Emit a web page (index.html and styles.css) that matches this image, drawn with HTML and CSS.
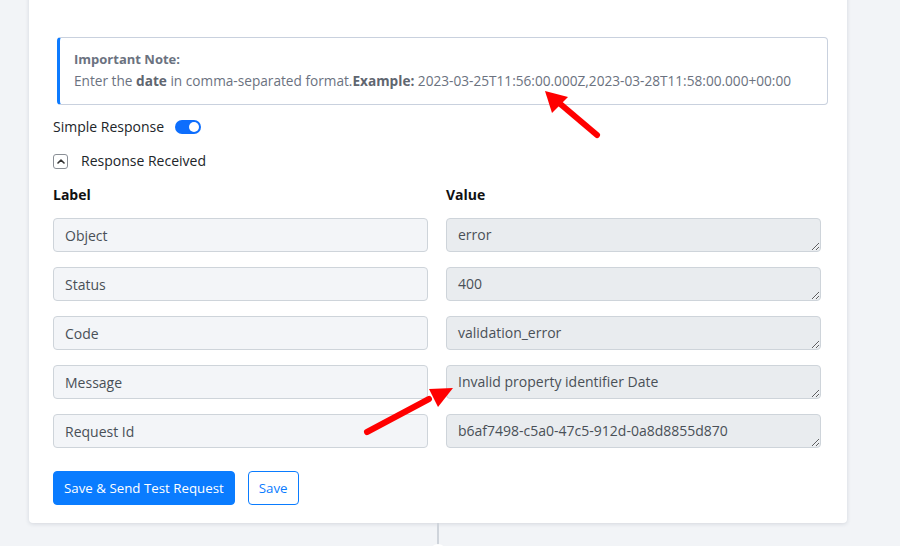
FILE: index.html
```html
<!DOCTYPE html>
<html lang="en">
<head>
    <meta charset="UTF-8">
    <meta name="viewport" content="width=device-width, initial-scale=1.0">
    <title>Response Received</title>
    <link rel="stylesheet" href="styles.css">
</head>
<body>
    <div class="card">
        <div class="note">
            <div class="note-title">Important Note:</div>
            <div class="note-text">Enter the <b>date</b> in comma-separated format.<b>Example:</b> 2023-03-25T11:56:00.000Z,2023-03-28T11:58:00.000+00:00</div>
        </div>

        <div class="switch-row">
            <span>Simple Response</span>
            <span class="toggle"><span class="knob"></span></span>
        </div>

        <div class="collapse-row">
            <span class="chevron">
                <svg width="8" height="6" viewBox="0 0 8 6"><path d="M1 5 L4 2 L7 5" fill="none" stroke="#333" stroke-width="1.6" stroke-linecap="round" stroke-linejoin="round"/></svg>
            </span>
            <span>Response Received</span>
        </div>

        <div class="grid">
            <div class="head">Label</div>
            <div class="head">Value</div>

            <input class="field" type="text" value="Object" readonly>
            <textarea class="value" readonly>error</textarea>

            <input class="field" type="text" value="Status" readonly>
            <textarea class="value" readonly>400</textarea>

            <input class="field" type="text" value="Code" readonly>
            <textarea class="value" readonly>validation_error</textarea>

            <input class="field" type="text" value="Message" readonly>
            <textarea class="value" readonly>Invalid property identifier Date</textarea>

            <input class="field" type="text" value="Request Id" readonly>
            <textarea class="value" readonly>b6af7498-c5a0-47c5-912d-0a8d8855d870</textarea>
        </div>

        <div class="actions">
            <button class="btn btn-primary">Save &amp; Send Test Request</button>
            <button class="btn btn-outline">Save</button>
        </div>

        <!-- markers pointing at the example date and the error message -->
        <svg class="marker marker-top" width="70" height="60" viewBox="0 0 70 60">
            <line x1="59" y1="51" x2="20" y2="18" stroke="#ff0000" stroke-width="6" stroke-linecap="round"/>
            <polygon points="7,7 30,13 14,29" fill="#ff0000"/>
        </svg>
        <svg class="marker marker-mid" width="100" height="60" viewBox="0 0 100 60">
            <line x1="8" y1="52" x2="70" y2="19" stroke="#ff0000" stroke-width="6" stroke-linecap="round"/>
            <polygon points="94,8 70,9 79,27" fill="#ff0000"/>
        </svg>
    </div>

    <div class="connector">
        <span class="stem"></span>
        <span class="dot"></span>
    </div>
</body>
</html>
```

FILE: styles.css
```css
body {
    margin: 0;
    background-color: #f2f4f7;
    font-family: "Open Sans", Arial, sans-serif;
    color: #212529;
    overflow: hidden;
}
.card {
    position: relative;
    background: white;
    margin: -10px 0 0 29px;
    width: 818px;
    box-sizing: border-box;
    padding: 47px 26px 18px 24px;
    border-radius: 4px;
    box-shadow: 0 1px 4px rgba(30, 45, 70, 0.14);
}
.note {
    margin: 0 -7px 0 4px;
    border: 1px solid #c9d1de;
    border-left: 3px solid #0d7bff;
    border-radius: 4px;
    padding: 11px 16px 13px 14px;
    font-size: 13.65px;
    line-height: 21px;
    color: #6b7280;
}
.note-title {
    font-weight: 700;
    font-size: 13px;
}
.note b {
    color: #5f6670;
}
.switch-row {
    display: flex;
    align-items: center;
    gap: 11px;
    margin-top: 12px;
    font-size: 14px;
    line-height: 20px;
}
.toggle {
    display: inline-block;
    position: relative;
    width: 26px;
    height: 14px;
    border-radius: 7px;
    background-color: #0d6efd;
}
.knob {
    position: absolute;
    top: 2px;
    right: 2px;
    width: 10px;
    height: 10px;
    border-radius: 50%;
    background: white;
}
.collapse-row {
    display: flex;
    align-items: center;
    gap: 13px;
    margin-top: 14px;
    font-size: 14px;
    line-height: 20px;
}
.chevron {
    display: inline-flex;
    align-items: center;
    justify-content: center;
    width: 13px;
    height: 13px;
    border: 1px solid #8a8f96;
    border-radius: 3px;
}
.grid {
    display: grid;
    grid-template-columns: 375px 375px;
    column-gap: 18px;
    row-gap: 15px;
    margin-top: 14px;
}
.head {
    font-size: 14px;
    font-weight: 700;
    line-height: 20px;
    color: #111;
    margin-bottom: -2px;
}
.field,
.value {
    box-sizing: border-box;
    height: 34px;
    margin: 0;
    padding: 6px 11px;
    font-family: "Open Sans", Arial, sans-serif;
    font-size: 14px;
    line-height: 20px;
    color: #495057;
    border: 1px solid #ced4da;
    border-radius: 4px;
    outline: none;
}
.field {
    background-color: #f3f5f8;
}
.value {
    background-color: #e9ecef;
    resize: vertical;
    overflow: hidden;
    white-space: nowrap;
}
.actions {
    display: flex;
    gap: 13px;
    margin-top: 23px;
}
.btn {
    height: 34px;
    padding: 0 10px;
    font-family: "Open Sans", Arial, sans-serif;
    font-size: 13.3px;
    border-radius: 4px;
    cursor: pointer;
}
.btn-primary {
    background-color: #0a7cff;
    border: 1px solid #0a7cff;
    color: white;
}
.btn-outline {
    background: white;
    border: 1px solid #0a7cff;
    color: #0a7cff;
}
.marker {
    position: absolute;
}
.marker-top {
    left: 509px;
    top: 94px;
}
.marker-mid {
    left: 330px;
    top: 390px;
}
.connector {
    position: relative;
    width: 818px;
    margin-left: 29px;
    height: 30px;
}
.stem {
    position: absolute;
    left: 408px;
    top: 0;
    width: 2px;
    height: 30px;
    background-color: #cfd4db;
}
.dot {
    position: absolute;
    left: 400px;
    top: 21px;
    width: 18px;
    height: 18px;
    border-radius: 50%;
    background: white;
}
```
